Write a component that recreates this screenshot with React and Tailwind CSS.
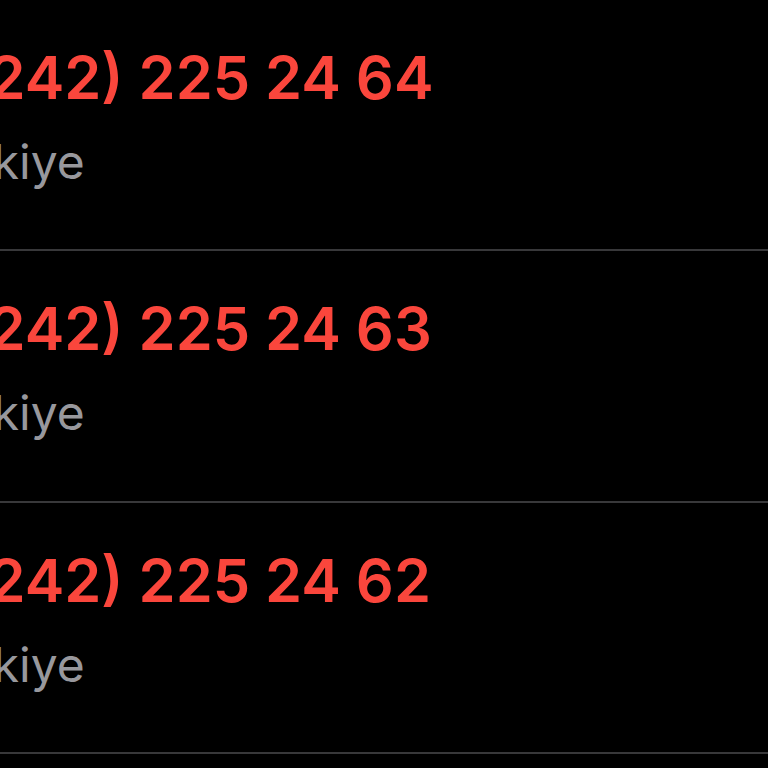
import React from 'react';

const calls = [
  { number: '+90 (242) 225 24 64', place: 'Türkiye' },
  { number: '+90 (242) 225 24 63', place: 'Türkiye' },
  { number: '+90 (242) 225 24 62', place: 'Türkiye' },
];

export default function App() {
  return (
    <div className="w-[768px] h-[768px] bg-black overflow-hidden font-['Inter',sans-serif]">
      <div className="-mt-[0.5px]">
        {calls.map((c, i) => (
          <div key={i} className="h-[251.5px] border-b-2 border-[#38383a] pt-[41px]">
            <div className="-ml-[166px] whitespace-nowrap text-[59.5px] leading-[72px] font-semibold text-[#fa463c]">
              {c.number}
            </div>
            <div className="-ml-[83px] mt-[20px] whitespace-nowrap text-[48px] leading-[58px] text-[#98989d]">
              {c.place}
            </div>
          </div>
        ))}
      </div>
    </div>
  );
}
